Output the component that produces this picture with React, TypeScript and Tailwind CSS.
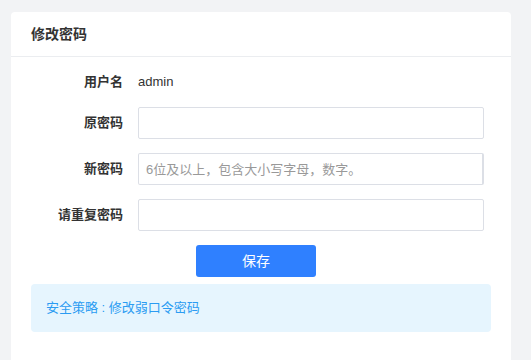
import React from 'react';

const font = "font-['Liberation_Sans','Noto_Sans_CJK_SC',sans-serif]";

const Row: React.FC<{ label: string; children: React.ReactNode; className?: string }> = ({ label, children, className }) => {
  return (
    <div className={`flex items-center h-[32px] ${className ?? ''}`}>
      <label className="w-[92px] text-right text-[13px] font-bold text-[#333]">{label}</label>
      <div className="ml-[15px] flex items-center">{children}</div>
    </div>
  );
};

const App: React.FC = () => {
  return (
    <div className={`h-screen overflow-hidden bg-[#f2f3f5] pt-[12px] pl-[11px] pr-[20px] ${font}`}>
      <div className="bg-white rounded-t-[4px] h-full">
        {/* header */}
        <div className="h-[45px] px-5 flex items-center border-b border-[#ebedf0]">
          <h2 className="text-[14px] font-bold text-[#333]">修改密码</h2>
        </div>

        {/* form */}
        <div className="px-5 pt-[9px]">
          <Row label="用户名">
            <span className="text-[13px] text-[#333]">admin</span>
          </Row>
          <Row label="原密码" className="mt-[9px]">
            <input type="password" className="w-[346px] h-[32px] px-[7px] border border-[#dcdfe6] rounded-[2px] text-[13px] outline-none" />
          </Row>
          <Row label="新密码" className="mt-[14px]">
            <input
              type="password"
              placeholder="6位及以上，包含大小写字母，数字。"
              className="w-[346px] h-[32px] px-[7px] border border-r-2 border-[#dcdfe6] rounded-[2px] text-[13px] outline-none placeholder:text-[#999]"
            />
          </Row>
          <Row label="请重复密码" className="mt-[14px]">
            <input type="password" className="w-[346px] h-[32px] px-[7px] border border-[#dcdfe6] rounded-[2px] text-[13px] outline-none" />
          </Row>

          <button className="mt-[14px] ml-[165px] w-[120px] h-[32px] rounded-[3px] bg-[#2f80ff] text-white text-[14px]">
            保存
          </button>

          <div className="mt-[7px] h-[48px] px-[15px] flex items-center rounded-[4px] bg-[#e6f5fe] text-[13px] text-[#2b9cf2]">
            安全策略 : 修改弱口令密码
          </div>
        </div>
      </div>
    </div>
  );
};

export default App;
